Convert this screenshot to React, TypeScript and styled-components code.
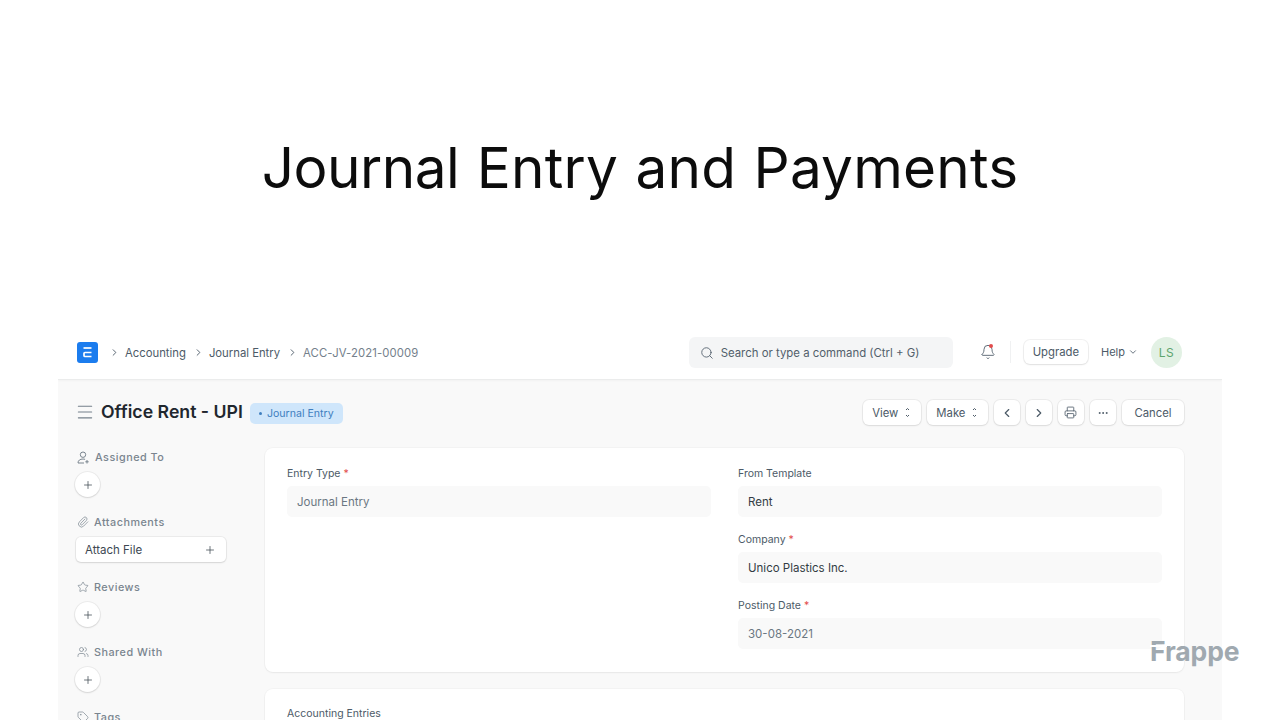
import React from "react";
import styled, { createGlobalStyle } from "styled-components";
import {
  Bell,
  ChevronDown,
  ChevronLeft,
  ChevronRight,
  Ellipsis,
  Menu,
  Paperclip,
  Plus,
  Printer,
  Search,
  Star,
  Tag,
  Users,
} from "lucide-react";

const GlobalStyle = createGlobalStyle`
  html, body {
    margin: 0;
    padding: 0;
    background: #fff;
    overflow: hidden;
    font-family: Inter, "Liberation Sans", sans-serif;
  }
`;

const Stage = styled.div`
  position: relative;
  width: 1280px;
  height: 720px;
  overflow: hidden;
  background: #fff;
`;

const Heading = styled.h1`
  margin: 0;
  height: 332px;
  padding-top: 133px;
  box-sizing: border-box;
  text-align: center;
  font-size: 56.7px;
  line-height: 69px;
  font-weight: 400;
  letter-spacing: 0.2px;
  word-spacing: 1.3px;
  color: #0c0c0c;
`;

const HeadingTightWord = styled.span`
  letter-spacing: -0.5px;
`;

const AppWindow = styled.div`
  margin: 0 58px;
  height: 388px;
  overflow: hidden;
  background: #f9f9f9;
`;

const Navbar = styled.header`
  height: 48px;
  box-sizing: border-box;
  padding: 0 40px 7px 19px;
  display: flex;
  align-items: center;
  background: #fff;
  border-bottom: 1px solid #ebecec;
  box-shadow: 0 1px 2px rgba(0, 0, 0, 0.03);
`;

const Logo = styled.div`
  width: 21px;
  height: 21px;
  border-radius: 3px;
  background: #1b7cee;
  display: flex;
  align-items: center;
  justify-content: center;
  margin-right: 11px;
`;

const Crumb = styled.span<{ $muted?: boolean }>`
  display: inline-flex;
  align-items: center;
  gap: 5px;
  margin-right: 7px;
  padding-top: 1px;
  font-size: 11.3px;
  color: ${(p) => (p.$muted ? "#74808b" : "#4c5a67")};
  letter-spacing: ${(p) => (p.$muted ? "0.12px" : "0")};
  white-space: nowrap;
`;

const SearchBox = styled.div`
  margin-left: auto;
  width: 264px;
  height: 31px;
  box-sizing: border-box;
  padding: 1px 0 0 11px;
  display: flex;
  align-items: center;
  gap: 7px;
  background: #f4f5f6;
  border-radius: 6px;
  font-size: 11.4px;
  color: #525f6b;
`;

const BellWrap = styled.div`
  position: relative;
  display: flex;
  margin-left: 27px;
  color: #4c5a67;
`;

const BellDot = styled.span`
  position: absolute;
  top: 0;
  right: 3px;
  width: 4px;
  height: 4px;
  border-radius: 50%;
  background: #e24c4c;
`;

const NavDivider = styled.div`
  width: 1px;
  height: 22px;
  margin: 0 13px 0 14px;
  background: #f0f1f2;
`;

const Button = styled.div<{ $square?: boolean; $height?: number; $pad?: number }>`
  height: ${(p) => p.$height ?? 25}px;
  box-sizing: border-box;
  padding: ${(p) => (p.$square ? "0" : `0 ${p.$pad ?? 9}px`)};
  width: ${(p) => (p.$square ? "26px" : "auto")};
  display: inline-flex;
  align-items: center;
  justify-content: center;
  gap: 6px;
  background: #fff;
  border-radius: 6px;
  font-size: 11.3px;
  color: #4c5a67;
  box-shadow: 0 0 0 1px rgba(0, 0, 0, 0.05), 0 1px 2px rgba(0, 0, 0, 0.08);
  white-space: nowrap;
`;

const HelpMenu = styled.div`
  display: flex;
  align-items: center;
  gap: 3px;
  margin: 0 13px 0 13px;
  font-size: 11px;
  color: #4c5a67;
`;

const Avatar = styled.div`
  width: 31px;
  height: 31px;
  border-radius: 50%;
  background: #e2f1e4;
  color: #5da56d;
  font-size: 12px;
  letter-spacing: 0.4px;
  display: flex;
  align-items: center;
  justify-content: center;
`;

const PageHead = styled.div`
  height: 68px;
  box-sizing: border-box;
  padding: 0 38px 3px 17px;
  display: flex;
  align-items: center;
`;

const MenuIcon = styled(Menu)`
  color: #74808b;
  margin: -2px 6px 0 0;
`;

const Title = styled.h2`
  margin: -2px 7px 0 0;
  font-size: 17.7px;
  line-height: 20px;
  font-weight: 600;
  color: #1f272e;
  white-space: nowrap;
`;

const Pill = styled.div`
  height: 21px;
  box-sizing: border-box;
  padding: 0 9px;
  margin-top: 2px;
  display: flex;
  align-items: center;
  gap: 5px;
  background: #cfe6fb;
  border-radius: 5px;
  font-size: 10.6px;
  color: #3f7fbf;
`;

const PillDot = styled.span`
  width: 3px;
  height: 3px;
  border-radius: 50%;
  background: #3f7fbf;
`;

const Actions = styled.div`
  margin-left: auto;
  display: flex;
  align-items: center;
  gap: 6px;
`;

const Body = styled.div`
  display: grid;
  grid-template-columns: 151px 919px;
  column-gap: 39px;
  padding-left: 17px;
`;

const Sidebar = styled.aside`
  display: flex;
  flex-direction: column;
  padding-top: 1px;
`;

const SideGroup = styled.section`
  height: 65px;
`;

const SideLabel = styled.div`
  height: 16px;
  display: flex;
  align-items: center;
  gap: 5px;
  margin: 0 0 7px 2px;
  font-size: 10.8px;
  font-weight: 500;
  letter-spacing: 0.5px;
  color: #7a858f;
`;

const RoundButton = styled.div`
  width: 25px;
  height: 25px;
  border-radius: 50%;
  background: #fff;
  color: #3d4852;
  display: flex;
  align-items: center;
  justify-content: center;
  box-shadow: 0 0 0 1px rgba(0, 0, 0, 0.05), 0 1px 2px rgba(0, 0, 0, 0.1);
`;

const AttachButton = styled.div`
  width: 150px;
  height: 25px;
  margin-left: 1px;
  box-sizing: border-box;
  padding: 0 10px 0 9px;
  display: flex;
  align-items: center;
  justify-content: space-between;
  background: #fff;
  border-radius: 5px;
  font-size: 11.5px;
  color: #3d4852;
  box-shadow: 0 0 0 1px rgba(0, 0, 0, 0.05), 0 1px 2px rgba(0, 0, 0, 0.1);
`;

const Content = styled.main`
  display: flex;
  flex-direction: column;
  gap: 17px;
`;

const Card = styled.div`
  background: #fff;
  border-radius: 8px;
  box-shadow: 0 0 0 1px rgba(0, 0, 0, 0.025), 0 1px 2px rgba(0, 0, 0, 0.05);
`;

const FormCard = styled(Card)`
  height: 224px;
  box-sizing: border-box;
  padding: 17px 22px 0;
  display: grid;
  grid-template-columns: 424px 424px;
  column-gap: 27px;
`;

const LowerCard = styled(Card)`
  height: 80px;
  box-sizing: border-box;
  padding: 18px 22px;
  font-size: 10.5px;
  color: #4c5a67;
`;

const Column = styled.div`
  display: flex;
  flex-direction: column;
  gap: 14px;
`;

const Field = styled.div`
  display: flex;
  flex-direction: column;
  gap: 4px;
`;

const FieldLabel = styled.label`
  height: 17px;
  line-height: 18px;
  font-size: 10.5px;
  color: #4c5a67;
`;

const Required = styled.span`
  color: #e24c4c;
`;

const FieldValue = styled.div<{ $muted?: boolean }>`
  height: 31px;
  box-sizing: border-box;
  padding-left: 10px;
  display: flex;
  align-items: center;
  background: #f9f9f9;
  border-radius: 5px;
  font-size: 11.5px;
  color: ${(p) => (p.$muted ? "#6b7782" : "#333c44")};
`;

const Watermark = styled.div`
  position: absolute;
  left: 1150px;
  top: 633px;
  font-size: 26.5px;
  line-height: 36px;
  font-weight: 700;
  letter-spacing: -0.1px;
  color: #a0a9b0;

  &::after {
    content: "";
    position: absolute;
    left: 0;
    top: 12px;
    width: 17px;
    height: 2px;
    background: #fff;
  }
`;

function UpDownIcon() {
  return (
    <svg width="7" height="11" viewBox="0 0 7 11" fill="none" stroke="currentColor" strokeWidth="1">
      <path d="M2 3 3.500 1.500 5 3" />
      <path d="M2 8 3.500 9.500 5 8" />
    </svg>
  );
}

function AssignIcon() {
  return (
    <svg width="13" height="13" viewBox="0 0 13 13" fill="none" stroke="currentColor" strokeWidth="1">
      <circle cx="6" cy="3.700" r="2.700" />
      <path d="M1 12c0-2.600 2-4 5-4 .8 0 1.500.1 2.100.3M1 12h6" />
      <path d="M10 9v3.500M8.300 10.800h3.400" />
    </svg>
  );
}

const sideGroups = [
  { label: "Assigned To", icon: <AssignIcon /> },
  { label: "Attachments", icon: <Paperclip size={12} strokeWidth={1.4} />, attach: true },
  { label: "Reviews", icon: <Star size={12} strokeWidth={1.4} /> },
  { label: "Shared With", icon: <Users size={12} strokeWidth={1.4} /> },
  { label: "Tags", icon: <Tag size={12} strokeWidth={1.4} /> },
];

export default function App() {
  return (
    <Stage>
      <GlobalStyle />
      <Heading>
        <HeadingTightWord>Journal</HeadingTightWord> Entry and Payments
      </Heading>
      <AppWindow>
        <Navbar>
          <Logo>
            <svg width="9" height="11" viewBox="0 0 9 11" fill="none" stroke="#fff" strokeWidth="1.700">
              <path d="M0.500 1h8" />
              <path d="M8.500 5.500H2a1 1 0 0 0-1 1v2a1 1 0 0 0 1 1h6.500" />
            </svg>
          </Logo>
          <Crumb>
            <ChevronRight size={11} color="#4c5a67" />
            Accounting
          </Crumb>
          <Crumb>
            <ChevronRight size={11} color="#4c5a67" />
            Journal Entry
          </Crumb>
          <Crumb $muted>
            <ChevronRight size={11} color="#4c5a67" />
            ACC-JV-2021-00009
          </Crumb>
          <SearchBox>
            <Search size={14} strokeWidth={1.500} />
            Search or type a command (Ctrl + G)
          </SearchBox>
          <BellWrap>
            <Bell size={16} strokeWidth={1.300} />
            <BellDot />
          </BellWrap>
          <NavDivider />
          <Button $height={24}>Upgrade</Button>
          <HelpMenu>
            Help
            <ChevronDown size={10} />
          </HelpMenu>
          <Avatar>LS</Avatar>
        </Navbar>
        <PageHead>
          <MenuIcon size={20} strokeWidth={1.300} />
          <Title>Office Rent - UPI</Title>
          <Pill>
            <PillDot />
            Journal Entry
          </Pill>
          <Actions>
            <Button $pad={9.500}>
              View
              <UpDownIcon />
            </Button>
            <Button $pad={9.500}>
              Make
              <UpDownIcon />
            </Button>
            <Button $square>
              <ChevronLeft size={14} />
            </Button>
            <Button $square>
              <ChevronRight size={14} />
            </Button>
            <Button $square>
              <Printer size={13} strokeWidth={1.500} />
            </Button>
            <Button $square>
              <Ellipsis size={12} />
            </Button>
            <Button $pad={12.500}>Cancel</Button>
          </Actions>
        </PageHead>
        <Body>
          <Sidebar>
            {sideGroups.map((g) => (
              <SideGroup key={g.label}>
                <SideLabel>
                  {g.icon}
                  {g.label}
                </SideLabel>
                {g.attach ? (
                  <AttachButton>
                    Attach File
                    <Plus size={12} strokeWidth={1.500} />
                  </AttachButton>
                ) : (
                  <RoundButton>
                    <Plus size={12} strokeWidth={1.500} />
                  </RoundButton>
                )}
              </SideGroup>
            ))}
          </Sidebar>
          <Content>
            <FormCard>
              <Column>
                <Field>
                  <FieldLabel>
                    Entry Type <Required>*</Required>
                  </FieldLabel>
                  <FieldValue $muted>Journal Entry</FieldValue>
                </Field>
              </Column>
              <Column>
                <Field>
                  <FieldLabel>From Template</FieldLabel>
                  <FieldValue>Rent</FieldValue>
                </Field>
                <Field>
                  <FieldLabel>
                    Company <Required>*</Required>
                  </FieldLabel>
                  <FieldValue>Unico Plastics Inc.</FieldValue>
                </Field>
                <Field>
                  <FieldLabel>
                    Posting Date <Required>*</Required>
                  </FieldLabel>
                  <FieldValue $muted>30-08-2021</FieldValue>
                </Field>
              </Column>
            </FormCard>
            <LowerCard>Accounting Entries</LowerCard>
          </Content>
        </Body>
      </AppWindow>
      <Watermark>Frappe</Watermark>
    </Stage>
  );
}
